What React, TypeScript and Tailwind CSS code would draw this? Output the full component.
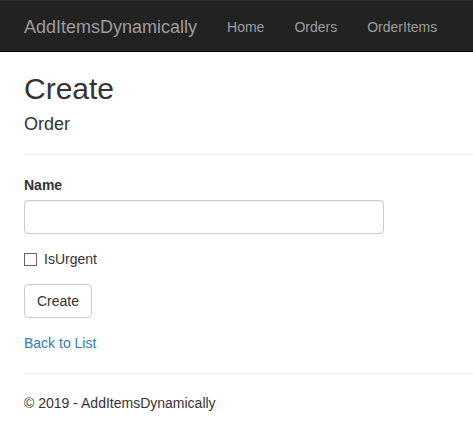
export default function App() {
  return (
    <div className="min-h-screen bg-white text-[14px] leading-[20px] text-[#333] font-['Liberation_Sans',Arial,sans-serif]">
      <nav className="h-[52px] border-t border-b border-t-[#2b2f33] border-b-[#080808] bg-[#222]">
        <div className="flex items-start pl-[24px] pt-[16px]">
          <a href="#" className="pr-[15px] text-[18px] leading-[20px] text-[#9d9d9d]">
            AddItemsDynamically
          </a>
          <ul className="flex">
            <li>
              <a href="#" className="px-[15px] text-[#9d9d9d]">Home</a>
            </li>
            <li>
              <a href="#" className="px-[15px] text-[#9d9d9d]">Orders</a>
            </li>
            <li>
              <a href="#" className="px-[15px] text-[#9d9d9d]">OrderItems</a>
            </li>
          </ul>
        </div>
      </nav>

      <main className="pl-[24px]">
        <h2 className="mt-[20px] text-[30px] leading-[33px] font-normal">Create</h2>
        <h4 className="mt-[9px] text-[18px] leading-[20px] font-normal">Order</h4>
        <hr className="mt-[20px] border-0 border-t border-[#eee]" />

        <form className="w-[360px]">
          <div className="mb-[15px]">
            <label className="mt-[20px] mb-[5px] block font-bold">Name</label>
            <input
              type="text"
              className="block h-[34px] w-full rounded-[4px] border border-[#ccc] bg-white px-[12px] py-[6px] shadow-[inset_0_1px_1px_rgba(0,0,0,0.075)]"
            />
          </div>
          <div className="mb-[15px] flex items-center">
            <input
              type="checkbox"
              className="m-0 h-[13px] w-[13px] appearance-none border border-[#666] bg-white"
            />
            <label className="ml-[7px]">IsUrgent</label>
          </div>
          <div className="mb-[15px]">
            <button
              type="button"
              className="h-[34px] rounded-[4px] border border-[#ccc] bg-white px-[12px] text-[#333]"
            >
              Create
            </button>
          </div>
        </form>

        <div>
          <a href="#" className="text-[#337ab7]">Back to List</a>
        </div>

        <hr className="mt-[20px] border-0 border-t border-[#eee]" />
        <footer className="pt-[19px]">
          <p>© 2019 - AddItemsDynamically</p>
        </footer>
      </main>
    </div>
  );
}
